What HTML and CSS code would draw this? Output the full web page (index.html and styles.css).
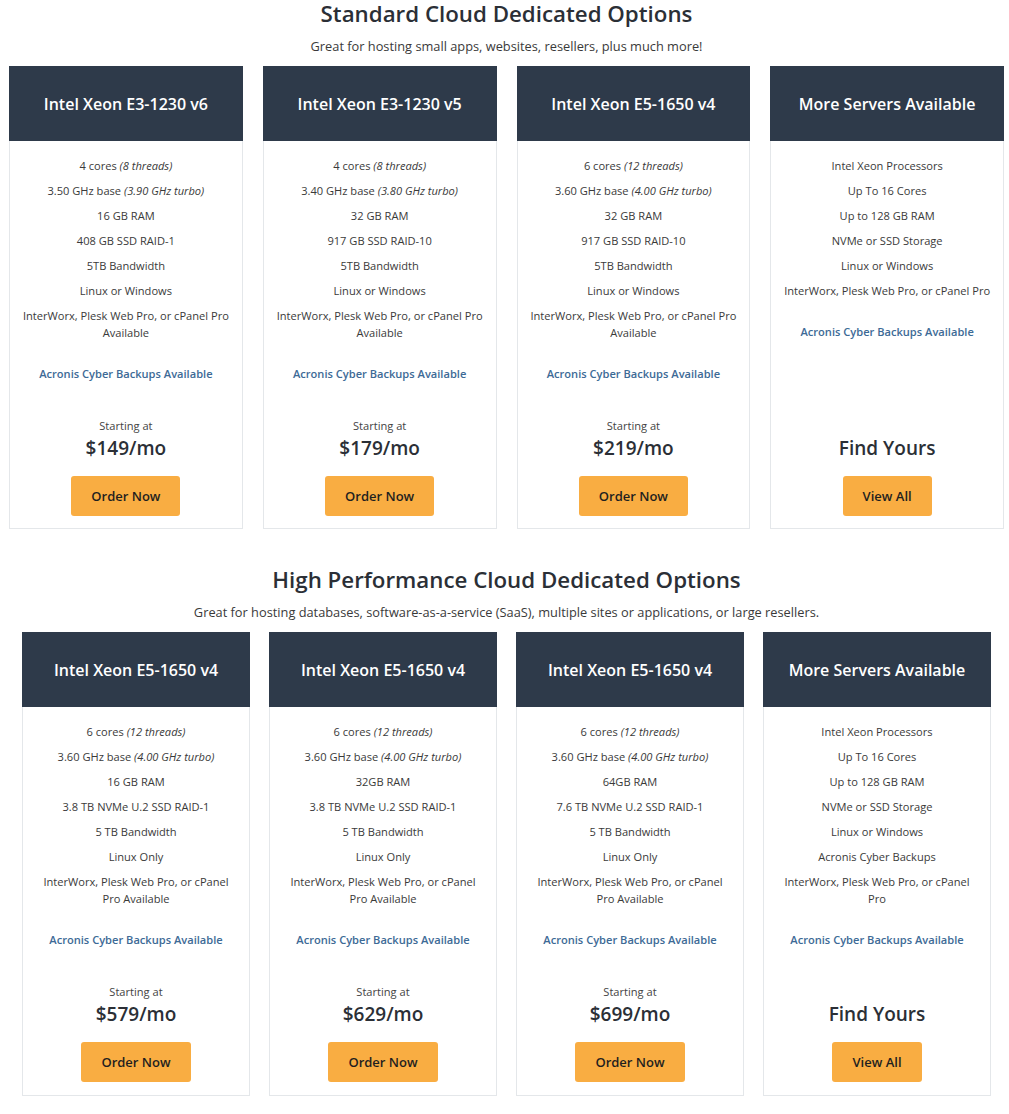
FILE: index.html
```html
<!DOCTYPE html>
<html lang="en">
<head>
<meta charset="utf-8">
<title>Cloud Dedicated Options</title>
<link rel="stylesheet" href="styles.css">
</head>
<body>
<main class="page">
  <section class="group group-standard">
    <h2 class="group-title">Standard Cloud Dedicated Options</h2>
    <p class="group-sub">Great for hosting small apps, websites, resellers, plus much more!</p>
    <div class="cards">
      <div class="card">
        <div class="card-head">Intel Xeon E3-1230 v6</div>
        <div class="card-body">
          <ul class="specs">
            <li>4 cores <em>(8 threads)</em></li>
            <li>3.50 GHz base <em>(3.90 GHz turbo)</em></li>
            <li>16 GB RAM</li>
            <li>408 GB SSD RAID-1</li>
            <li>5TB Bandwidth</li>
            <li>Linux or Windows</li>
            <li>InterWorx, Plesk Web Pro, or cPanel Pro Available</li>
          </ul>
          <p class="backup">Acronis Cyber Backups Available</p>
          <div class="card-foot">
            <p class="starting">Starting at</p>
            <p class="price">$149/mo</p>
            <a class="btn" href="#">Order Now</a>
          </div>
        </div>
      </div>
      <div class="card">
        <div class="card-head">Intel Xeon E3-1230 v5</div>
        <div class="card-body">
          <ul class="specs">
            <li>4 cores <em>(8 threads)</em></li>
            <li>3.40 GHz base <em>(3.80 GHz turbo)</em></li>
            <li>32 GB RAM</li>
            <li>917 GB SSD RAID-10</li>
            <li>5TB Bandwidth</li>
            <li>Linux or Windows</li>
            <li>InterWorx, Plesk Web Pro, or cPanel Pro Available</li>
          </ul>
          <p class="backup">Acronis Cyber Backups Available</p>
          <div class="card-foot">
            <p class="starting">Starting at</p>
            <p class="price">$179/mo</p>
            <a class="btn" href="#">Order Now</a>
          </div>
        </div>
      </div>
      <div class="card">
        <div class="card-head">Intel Xeon E5-1650 v4</div>
        <div class="card-body">
          <ul class="specs">
            <li>6 cores <em>(12 threads)</em></li>
            <li>3.60 GHz base <em>(4.00 GHz turbo)</em></li>
            <li>32 GB RAM</li>
            <li>917 GB SSD RAID-10</li>
            <li>5TB Bandwidth</li>
            <li>Linux or Windows</li>
            <li>InterWorx, Plesk Web Pro, or cPanel Pro Available</li>
          </ul>
          <p class="backup">Acronis Cyber Backups Available</p>
          <div class="card-foot">
            <p class="starting">Starting at</p>
            <p class="price">$219/mo</p>
            <a class="btn" href="#">Order Now</a>
          </div>
        </div>
      </div>
      <div class="card">
        <div class="card-head">More Servers Available</div>
        <div class="card-body">
          <ul class="specs">
            <li>Intel Xeon Processors</li>
            <li>Up To 16 Cores</li>
            <li>Up to 128 GB RAM</li>
            <li>NVMe or SSD Storage</li>
            <li>Linux or Windows</li>
            <li>InterWorx, Plesk Web Pro, or cPanel Pro</li>
          </ul>
          <p class="backup">Acronis Cyber Backups Available</p>
          <div class="card-foot">
            <p class="price">Find Yours</p>
            <a class="btn" href="#">View All</a>
          </div>
        </div>
      </div>
    </div>
  </section>

  <section class="group group-high">
    <h2 class="group-title">High Performance Cloud Dedicated Options</h2>
    <p class="group-sub">Great for hosting databases, software-as-a-service (SaaS), multiple sites or applications, or large resellers.</p>
    <div class="cards">
      <div class="card">
        <div class="card-head">Intel Xeon E5-1650 v4</div>
        <div class="card-body">
          <ul class="specs">
            <li>6 cores <em>(12 threads)</em></li>
            <li>3.60 GHz base <em>(4.00 GHz turbo)</em></li>
            <li>16 GB RAM</li>
            <li>3.8 TB NVMe U.2 SSD RAID-1</li>
            <li>5 TB Bandwidth</li>
            <li>Linux Only</li>
            <li>InterWorx, Plesk Web Pro, or cPanel Pro Available</li>
          </ul>
          <p class="backup">Acronis Cyber Backups Available</p>
          <div class="card-foot">
            <p class="starting">Starting at</p>
            <p class="price">$579/mo</p>
            <a class="btn" href="#">Order Now</a>
          </div>
        </div>
      </div>
      <div class="card">
        <div class="card-head">Intel Xeon E5-1650 v4</div>
        <div class="card-body">
          <ul class="specs">
            <li>6 cores <em>(12 threads)</em></li>
            <li>3.60 GHz base <em>(4.00 GHz turbo)</em></li>
            <li>32GB RAM</li>
            <li>3.8 TB NVMe U.2 SSD RAID-1</li>
            <li>5 TB Bandwidth</li>
            <li>Linux Only</li>
            <li>InterWorx, Plesk Web Pro, or cPanel Pro Available</li>
          </ul>
          <p class="backup">Acronis Cyber Backups Available</p>
          <div class="card-foot">
            <p class="starting">Starting at</p>
            <p class="price">$629/mo</p>
            <a class="btn" href="#">Order Now</a>
          </div>
        </div>
      </div>
      <div class="card">
        <div class="card-head">Intel Xeon E5-1650 v4</div>
        <div class="card-body">
          <ul class="specs">
            <li>6 cores <em>(12 threads)</em></li>
            <li>3.60 GHz base <em>(4.00 GHz turbo)</em></li>
            <li>64GB RAM</li>
            <li>7.6 TB NVMe U.2 SSD RAID-1</li>
            <li>5 TB Bandwidth</li>
            <li>Linux Only</li>
            <li>InterWorx, Plesk Web Pro, or cPanel Pro Available</li>
          </ul>
          <p class="backup">Acronis Cyber Backups Available</p>
          <div class="card-foot">
            <p class="starting">Starting at</p>
            <p class="price">$699/mo</p>
            <a class="btn" href="#">Order Now</a>
          </div>
        </div>
      </div>
      <div class="card">
        <div class="card-head">More Servers Available</div>
        <div class="card-body">
          <ul class="specs">
            <li>Intel Xeon Processors</li>
            <li>Up To 16 Cores</li>
            <li>Up to 128 GB RAM</li>
            <li>NVMe or SSD Storage</li>
            <li>Linux or Windows</li>
            <li>Acronis Cyber Backups</li>
            <li>InterWorx, Plesk Web Pro, or cPanel Pro</li>
          </ul>
          <p class="backup">Acronis Cyber Backups Available</p>
          <div class="card-foot">
            <p class="price">Find Yours</p>
            <a class="btn" href="#">View All</a>
          </div>
        </div>
      </div>
    </div>
  </section>
</main>
</body>
</html>
```
FILE: styles.css
```css
* { box-sizing: border-box; }

html, body {
  margin: 0;
  padding: 0;
  background: #ffffff;
}

body {
  font-family: "Open Sans", "Liberation Sans", Arial, sans-serif;
  color: #3a3a3a;
}

.page {
  padding-left: 4px;
}

.group {
  margin: 0 auto;
  text-align: center;
}

.group-standard { width: 995px; }
.group-high { width: 969px; margin-top: 37px; }

.group-title {
  margin: 0;
  font-size: 22.3px;
  line-height: 28px;
  font-weight: 600;
  color: #2b2f36;
}

.group-sub {
  margin: 8px 0 0;
  font-size: 12.8px;
  line-height: 20px;
  color: #3a3a3a;
}

.cards {
  margin-top: 10px;
  display: grid;
  grid-template-columns: repeat(4, 1fr);
  gap: 20px;
}

.group-high .cards { gap: 19px; }

.card {
  display: flex;
  flex-direction: column;
  border: 1px solid #e4e7ea;
  border-top: none;
  background: #fff;
}

.card-head {
  height: 75px;
  margin: 0 -1px;
  background: #2e3a4a;
  color: #ffffff;
  font-size: 16px;
  font-weight: 600;
  display: flex;
  align-items: center;
  justify-content: center;
}

.card-body {
  flex: 1;
  display: flex;
  flex-direction: column;
  padding: 16px 11px 12px;
}

.group-high .card-body { padding-bottom: 13px; }

.specs {
  list-style: none;
  margin: 0;
  padding: 0;
  display: flex;
  flex-direction: column;
  gap: 8px;
  font-size: 11.1px;
  line-height: 17px;
  color: #3a3a3a;
}

.specs em { font-style: italic; }

.backup {
  margin: 24px 0 0;
  font-size: 11.1px;
  line-height: 17px;
  font-weight: 600;
  color: #3d6a96;
}

.card-foot {
  margin-top: auto;
  padding-top: 35px;
  display: flex;
  flex-direction: column;
  align-items: center;
}

.starting {
  margin: 0;
  font-size: 11.1px;
  line-height: 17px;
  color: #444;
}

.price {
  margin: 0;
  font-size: 19px;
  line-height: 28px;
  font-weight: 600;
  color: #2b2f36;
}

.btn {
  margin-top: 14px;
  height: 40px;
  padding: 0 20px;
  display: inline-flex;
  align-items: center;
  background: #f9ad42;
  border-radius: 3px;
  color: #1f1f1f;
  font-size: 13px;
  font-weight: 600;
  text-decoration: none;
}
```
